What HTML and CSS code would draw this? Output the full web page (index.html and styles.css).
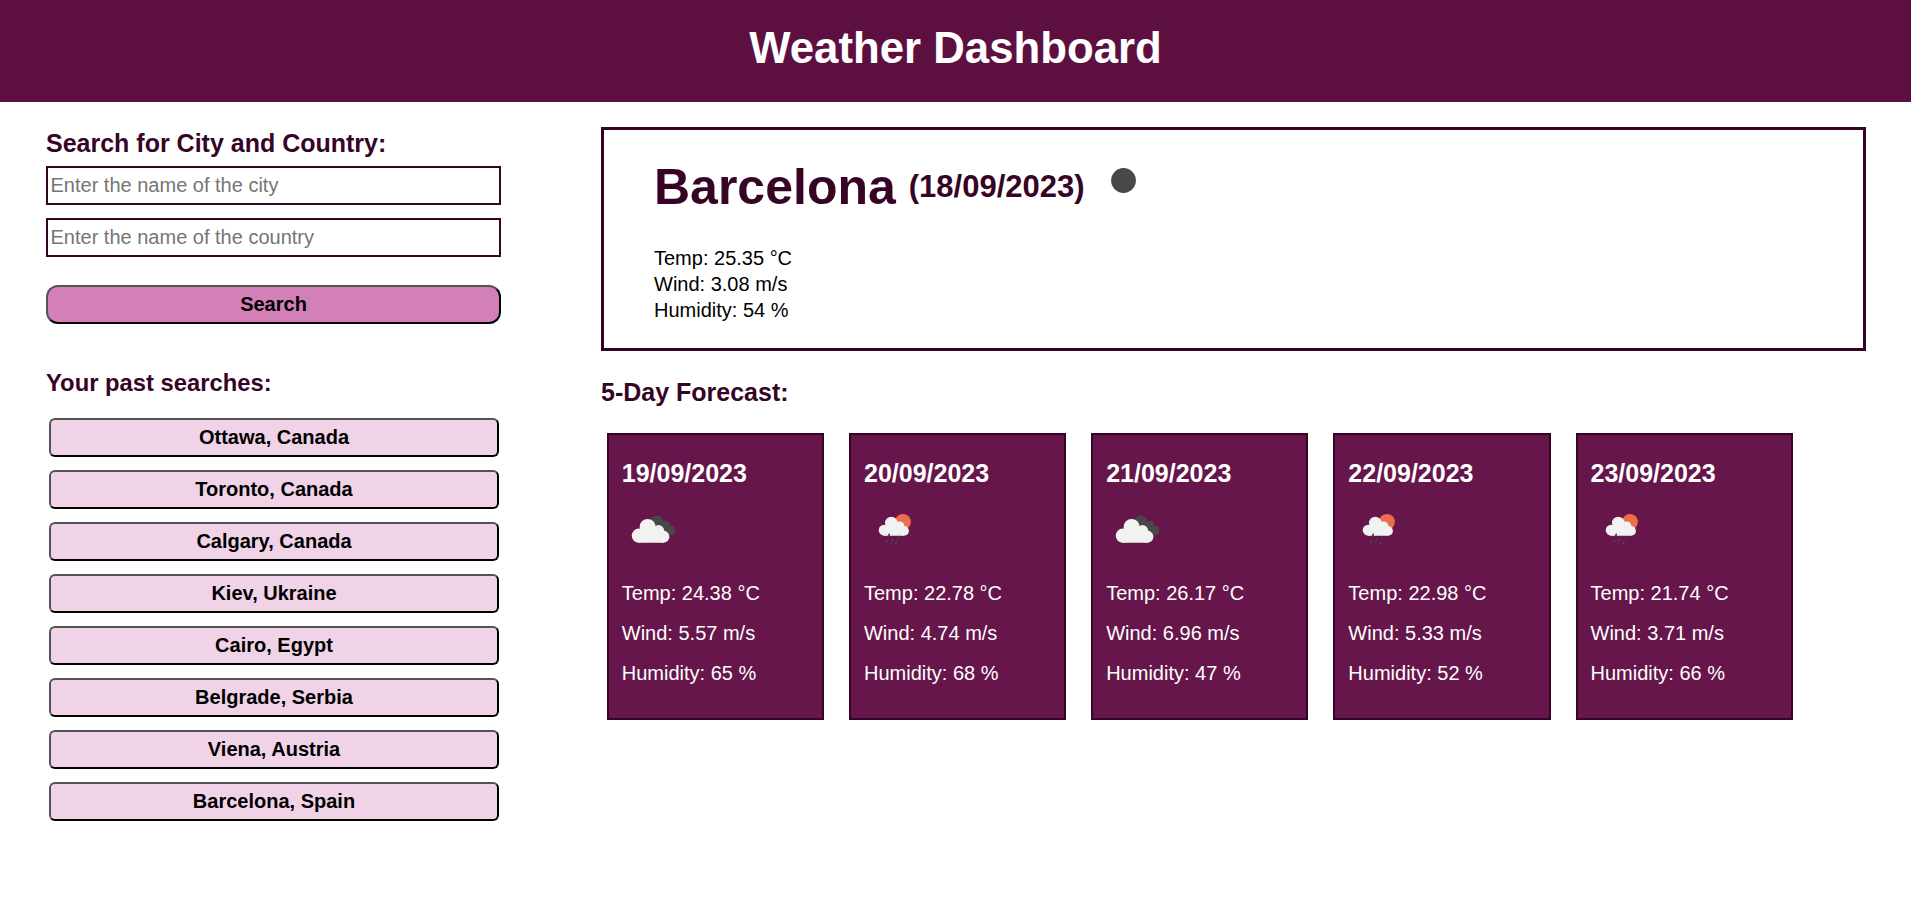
FILE: index.html
```html
<!DOCTYPE html>
<html lang="en">
<head>
<meta charset="utf-8">
<title>Weather Dashboard</title>
<link rel="stylesheet" href="styles.css">
</head>
<body>
<svg width="0" height="0" class="defs" aria-hidden="true">
  <symbol id="clouds" viewBox="0 0 60 60">
    <g fill="#484849"><circle cx="34.700" cy="21.800" r="6.400"/><circle cx="43.500" cy="25.500" r="5"/><circle cx="48.600" cy="30.500" r="4.800"/><path d="M34 20l10 4 4 11.300h-6z"/></g>
    <g fill="#f2f2f2"><circle cx="25.600" cy="27" r="8"/><circle cx="16.800" cy="35.700" r="7.100"/><circle cx="36.500" cy="30.600" r="5.600"/><circle cx="41.300" cy="36.700" r="6.100"/><path d="M17 30l8-3 12 3 5 6v6.800H16.800z"/></g>
  </symbol>
  <symbol id="rain" viewBox="0 0 60 60">
    <circle cx="39" cy="21.800" r="7.900" fill="#ec6e4c"/>
    <g fill="#f2f2f2"><circle cx="27.300" cy="23" r="6.300"/><circle cx="20.200" cy="30.200" r="5.500"/><circle cx="35.500" cy="26.300" r="4.900"/><circle cx="40" cy="30.900" r="4.900"/><path d="M20 26l7-3 9 3 4 5v4.800H20.200z"/></g>
    <path fill="none" stroke="#484849" stroke-width="1.700" stroke-linecap="round" d="M25.200 34.300l-.4 1.500M34.300 38.300l-.1.300M23.700 40.300l-.9 1.500M28.700 39.400l-.8 1.400M27 43.600l-.2.300M32.400 42.500l-.8 1.400"/>
  </symbol>
</svg>
<header class="header"><h1 class="title">Weather Dashboard</h1></header>
<div class="layout">
  <aside class="sidebar">
    <form class="search">
      <h2 class="heading">Search for City and Country:</h2>
      <input class="field" type="text" placeholder="Enter the name of the city">
      <input class="field" type="text" placeholder="Enter the name of the country">
      <button class="btn btn-search" type="button">Search</button>
    </form>
    <h2 class="heading past-heading">Your past searches:</h2>
    <div class="history">
      <button class="btn">Ottawa, Canada</button>
      <button class="btn">Toronto, Canada</button>
      <button class="btn">Calgary, Canada</button>
      <button class="btn">Kiev, Ukraine</button>
      <button class="btn">Cairo, Egypt</button>
      <button class="btn">Belgrade, Serbia</button>
      <button class="btn">Viena, Austria</button>
      <button class="btn">Barcelona, Spain</button>
    </div>
  </aside>
  <main class="main">
    <section class="today">
      <div class="today-head">
        <h2 class="city">Barcelona</h2>
        <h3 class="date">(18/09/2023)</h3>
        <svg class="sky" viewBox="0 0 25 25"><circle cx="12.500" cy="12.500" r="12.400" fill="#484849"/></svg>
      </div>
      <p class="stat">Temp: 25.35 °C</p>
      <p class="stat">Wind: 3.08 m/s</p>
      <p class="stat">Humidity: 54 %</p>
    </section>
    <h2 class="heading forecast-heading">5-Day Forecast:</h2>
    <section class="forecast">
      <article class="card"><h3 class="day">19/09/2023</h3><svg class="icon"><use href="#clouds"/></svg><p class="line">Temp: 24.38 °C</p><p class="line">Wind: 5.57 m/s</p><p class="line">Humidity: 65 %</p></article>
      <article class="card"><h3 class="day">20/09/2023</h3><svg class="icon"><use href="#rain"/></svg><p class="line">Temp: 22.78 °C</p><p class="line">Wind: 4.74 m/s</p><p class="line">Humidity: 68 %</p></article>
      <article class="card"><h3 class="day">21/09/2023</h3><svg class="icon"><use href="#clouds"/></svg><p class="line">Temp: 26.17 °C</p><p class="line">Wind: 6.96 m/s</p><p class="line">Humidity: 47 %</p></article>
      <article class="card"><h3 class="day">22/09/2023</h3><svg class="icon"><use href="#rain"/></svg><p class="line">Temp: 22.98 °C</p><p class="line">Wind: 5.33 m/s</p><p class="line">Humidity: 52 %</p></article>
      <article class="card"><h3 class="day">23/09/2023</h3><svg class="icon"><use href="#rain"/></svg><p class="line">Temp: 21.74 °C</p><p class="line">Wind: 3.71 m/s</p><p class="line">Humidity: 66 %</p></article>
    </section>
  </main>
</div>
</body>
</html>
```
FILE: styles.css
```css
* { box-sizing: border-box; margin: 0; padding: 0; }
body { font-family: "Liberation Sans", Arial, sans-serif; font-size: 20px; color: #000; background: #fff; }
.defs { display: block; }
.header { height: 102px; background: #5d1040; padding-top: 22px; text-align: center; }
.title { font-size: 43.750px; line-height: 51px; color: #fff; }
.layout { display: grid; grid-template-columns: 455px 1265px; column-gap: 100px; padding: 25px 0 0 46px; }
.heading { font-size: 25px; line-height: 28px; color: #360526; }
.search { display: flex; flex-direction: column; padding-top: 2px; }
.field { height: 39px; margin-bottom: 13px; border: 2px solid #360526; padding: 1px 2.500px; font: 20px "Liberation Sans", Arial, sans-serif; }
.search .heading { margin-bottom: 9px; }
.btn { height: 39px; border: 2px outset #000; border-radius: 6px; background: #f0d3e7; color: #000; font: bold 20px "Liberation Sans", Arial, sans-serif; }
.btn-search { margin-top: 15px; border-radius: 12px; background: #d480b8; }
.past-heading { margin-top: 45px; font-size: 23.800px; }
.history { display: flex; flex-direction: column; gap: 13px; padding: 21px 2px 0 3px; }
.today { height: 224px; border: 3px solid #360526; padding: 28px 50px 0 50px; }
.today-head { display: flex; align-items: center; height: 58px; margin-bottom: 29px; color: #360526; }
.city { font-size: 50px; line-height: 58px; margin-right: 13px; }
.date { font-size: 31px; line-height: 34px; }
.sky { width: 25px; height: 25px; margin: 0 0 13px 26px; }
.stat { line-height: 26px; }
.forecast-heading { margin-top: 27px; }
.forecast { display: flex; gap: 25px; padding: 27px 0 0 5.800px; }
.card { width: 217.200px; height: 287px; border: 2px solid #360526; padding: 24px 13px 0; background: #66164a; color: #fff; }
.day { font-size: 25px; line-height: 28px; }
.icon { display: block; width: 60px; height: 60px; margin: 13px 0 13px; }
.line { line-height: 40px; }
```
